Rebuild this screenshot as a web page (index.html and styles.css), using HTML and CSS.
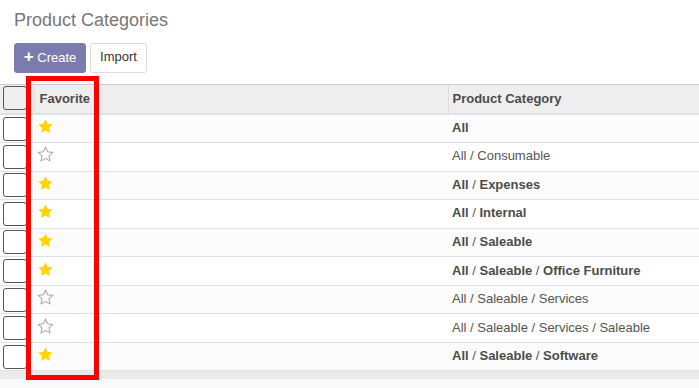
FILE: index.html
```html
<!DOCTYPE html>
<html lang="en">
<head>
    <meta charset="UTF-8">
    <title>Product Categories</title>
    <link rel="stylesheet" href="styles.css">
</head>
<body>
    <header class="control-panel">
        <h1 class="page-title">Product Categories</h1>
        <div class="buttons">
            <button class="btn btn-primary"><span class="plus">+</span> Create</button>
            <button class="btn btn-secondary">Import</button>
        </div>
    </header>

    <main class="list-view">
        <table class="list-table">
            <thead>
                <tr>
                    <th class="col-select"><span class="checkbox"></span></th>
                    <th class="col-fav">Favorite</th>
                    <th class="col-name">Product Category</th>
                </tr>
            </thead>
            <tbody id="rows"></tbody>
        </table>
        <div class="list-footer"></div>
        <div class="highlight"></div>
    </main>

    <script>
        const rowsContainer = document.getElementById('rows');

        const categories = [
            { parts: ['All'], favorite: true },
            { parts: ['All', 'Consumable'], favorite: false },
            { parts: ['All', 'Expenses'], favorite: true },
            { parts: ['All', 'Internal'], favorite: true },
            { parts: ['All', 'Saleable'], favorite: true },
            { parts: ['All', 'Saleable', 'Office Furniture'], favorite: true },
            { parts: ['All', 'Saleable', 'Services'], favorite: false },
            { parts: ['All', 'Saleable', 'Services', 'Saleable'], favorite: false },
            { parts: ['All', 'Saleable', 'Software'], favorite: true }
        ];

        const starPath = 'M8 1.2l2.05 4.3 4.7.6-3.45 3.25.88 4.65L8 11.75 3.82 14l.88-4.65L1.25 6.1l4.7-.6z';

        function starIcon(filled) {
            return `<svg class="star ${filled ? 'on' : 'off'}" width="17" height="17" viewBox="0 0 16 16"><path d="${starPath}"/></svg>`;
        }

        function categoryName(item) {
            const parts = item.parts.map(p => item.favorite ? `<b>${p}</b>` : p);
            return parts.join(' / ');
        }

        categories.forEach(item => {
            const tr = document.createElement('tr');
            tr.innerHTML = `
                <td class="col-select"><span class="checkbox"></span></td>
                <td class="col-fav">${starIcon(item.favorite)}</td>
                <td class="col-name">${categoryName(item)}</td>
            `;
            rowsContainer.appendChild(tr);
        });
    </script>
</body>
</html>
```

FILE: styles.css
```css
* {
    margin: 0;
    padding: 0;
    box-sizing: border-box;
}

body {
    font-family: "Liberation Sans", Arial, sans-serif;
    font-size: 13px;
    color: #4c4c4c;
    background-color: #f9f9f9;
    width: 699px;
    height: 388px;
    overflow: hidden;
}

.control-panel {
    background-color: #fff;
    padding: 9px 14px 11px;
    border-bottom: 1px solid #ccc;
}

.page-title {
    font-size: 18px;
    font-weight: 400;
    color: #777;
    line-height: 22px;
    margin-bottom: 12px;
}

.buttons {
    display: flex;
    gap: 4px;
}

.btn {
    font-family: inherit;
    font-size: 13px;
    height: 30px;
    padding: 0 0 3px;
    border-radius: 3px;
    cursor: pointer;
}

.btn-primary {
    background-color: #7c7bad;
    border: 1px solid #7c7bad;
    color: #fff;
    width: 72px;
}

.btn-primary .plus {
    font-weight: 900;
    font-size: 17px;
    line-height: 1;
}

.btn-secondary {
    background-color: #fff;
    border: 1px solid #ddd;
    color: #333;
    width: 57px;
}

.list-view {
    position: relative;
}

.list-table {
    width: 100%;
    border-collapse: collapse;
    table-layout: fixed;
}

.list-table th {
    background-color: #eee;
    height: 29px;
    padding-bottom: 2px;
    text-align: left;
    font-weight: 700;
    color: #4c4c4c;
    border-bottom: 2px solid #dee2e6;
}

.list-table th + th {
    border-left: 1px solid #ddd;
}

.list-table td {
    height: 28.55px;
    padding-bottom: 2px;
    border-bottom: 1px solid #dee2e6;
    color: #555;
}

.list-table tbody tr:nth-child(odd) {
    background-color: #fcfcfc;
}

.list-table tbody tr:nth-child(even) {
    background-color: #fff;
}

.col-select {
    width: 34px;
    padding-left: 3px;
}

.col-fav {
    width: 414px;
    padding-left: 3px;
}

.list-table th.col-fav {
    padding-left: 5px;
}

.col-name {
    padding-left: 4px;
}

.list-table b {
    color: #4c4c4c;
}

.checkbox {
    display: block;
    width: 24px;
    height: 24px;
    border: 1px solid #555;
    border-radius: 3px;
    background-color: #fff;
}

.list-table td.col-select {
    padding-bottom: 0;
}

thead .checkbox {
    background-color: transparent;
}

.star {
    display: block;
    margin-top: -2px;
}

.star.on path {
    fill: #ffd400;
}

.star.off path {
    fill: none;
    stroke: #aaa;
    stroke-width: 1;
}

.list-footer {
    height: 8px;
    background-color: #eaeaea;
}

.highlight {
    position: absolute;
    left: 26px;
    top: -9px;
    width: 73px;
    height: 304px;
    border: 5px solid #f00;
}
```
